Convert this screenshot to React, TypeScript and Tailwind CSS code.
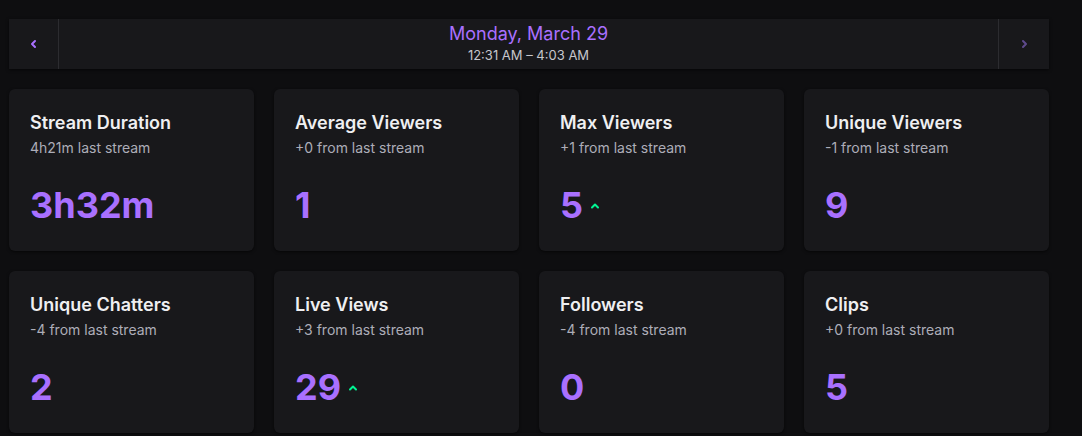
import React from "react";

type Stat = { title: string; sub: string; value: string; up?: boolean };

const stats: Stat[] = [
  { title: "Stream Duration", sub: "4h21m last stream", value: "3h32m" },
  { title: "Average Viewers", sub: "+0 from last stream", value: "1" },
  { title: "Max Viewers", sub: "+1 from last stream", value: "5", up: true },
  { title: "Unique Viewers", sub: "-1 from last stream", value: "9" },
  { title: "Unique Chatters", sub: "-4 from last stream", value: "2" },
  { title: "Live Views", sub: "+3 from last stream", value: "29", up: true },
  { title: "Followers", sub: "-4 from last stream", value: "0" },
  { title: "Clips", sub: "+0 from last stream", value: "5" },
];

function Chevron({ dir, className }: { dir: "left" | "right" | "up"; className?: string }) {
  const d =
    dir === "left" ? "M6 2 L3 5 L6 8" : dir === "right" ? "M4 2 L7 5 L4 8" : "M2 6.5 L5 3.5 L8 6.5";
  return (
    <svg viewBox="0 0 10 10" className={className} fill="none" stroke="currentColor" strokeWidth={2} strokeLinecap="round" strokeLinejoin="round">
      <path d={d} />
    </svg>
  );
}

function Card({ s }: { s: Stat }) {
  return (
    <div className="h-[162px] rounded-md bg-[#18181b] px-[21px] pt-[22px] shadow-[0_1px_3px_rgba(0,0,0,0.6)] flex flex-col">
      <div className="text-[18px] leading-[24px] font-semibold text-[#efeff1]">{s.title}</div>
      <div className="text-[14px] leading-[20px] text-[#adadb8] mt-[3px]">{s.sub}</div>
      <div className="mt-[27px] flex items-end">
        <span className="text-[36px] leading-[40px] font-bold text-[#a970ff]">{s.value}</span>
        {s.up && <Chevron dir="up" className="w-[10px] h-[10px] text-[#00f593] ml-[7px] mb-[14px]" />}
      </div>
    </div>
  );
}

export default function App() {
  return (
    <div className="min-h-[436px] bg-[#0e0e10] pt-[19px] pl-[9px]" style={{ fontFamily: "Inter, 'Noto Sans', sans-serif" }}>
      <div className="w-[1040px]">
        <div className="h-[50px] flex bg-[#18181b] shadow-[0_1px_3px_rgba(0,0,0,0.6)]">
          <div className="w-[50px] flex items-center justify-center border-r border-[#2c2c30]">
            <Chevron dir="left" className="w-[10px] h-[10px] text-[#a970ff]" />
          </div>
          <div className="flex-1 flex flex-col items-center justify-center">
            <div className="text-[18px] leading-[22px] text-[#a970ff]">Monday, March 29</div>
            <div className="text-[13px] leading-[20px] text-[#c6c6cc]">12:31 AM – 4:03 AM</div>
          </div>
          <div className="w-[51px] flex items-center justify-center border-l border-[#2c2c30]">
            <Chevron dir="right" className="w-[10px] h-[10px] text-[#5e4a8c]" />
          </div>
        </div>
        <div className="mt-[20px] grid grid-cols-4 gap-x-[20px] gap-y-[20px]">
          {stats.map((s) => (
            <Card key={s.title} s={s} />
          ))}
        </div>
      </div>
    </div>
  );
}
